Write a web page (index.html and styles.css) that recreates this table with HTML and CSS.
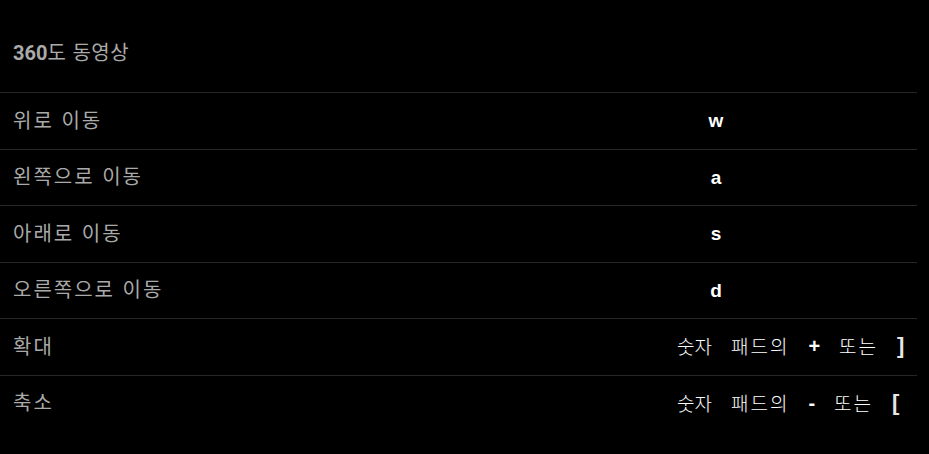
FILE: index.html
```html
<!DOCTYPE html>
<html lang="ko">
<head>
<meta charset="utf-8">
<link rel="stylesheet" href="styles.css">
</head>
<body>
<div class="panel">
  <div class="header"><span class="num">360</span>도 동영상</div>
  <div class="row"><div class="label">위로 이동</div><div class="key"><span class="k">w</span></div></div>
  <div class="row"><div class="label">왼쪽으로 이동</div><div class="key"><span class="k">a</span></div></div>
  <div class="row"><div class="label">아래로 이동</div><div class="key"><span class="k">s</span></div></div>
  <div class="row"><div class="label">오른쪽으로 이동</div><div class="key"><span class="k">d</span></div></div>
  <div class="row"><div class="label">확대</div><div class="key"><span class="combo"><span class="ko">숫자</span><span class="ko wide">패드의</span><span class="k">+</span><span class="ko wide">또는</span><span class="k br">]</span></span></div></div>
  <div class="row"><div class="label">축소</div><div class="key"><span class="combo"><span class="ko">숫자</span><span class="ko wide">패드의</span><span class="k">-</span><span class="ko wide">또는</span><span class="k br">[</span></span></div></div>
</div>
</body>
</html>
```
FILE: styles.css
```css
html, body {
  margin: 0;
  padding: 0;
  background: #000;
}
.panel {
  width: 917px;
  font-family: "Noto Sans CJK KR", "Noto Sans", sans-serif;
}
.header {
  height: 92px;
  box-sizing: border-box;
  padding: 38px 0 0 13px;
  font-size: 20px;
  line-height: 28px;
  color: #aaaaaa;
  letter-spacing: 0.5px;
}
.header .num {
  font-family: "Roboto", "Liberation Sans", sans-serif;
  font-weight: 700;
  letter-spacing: 0;
}
.row {
  display: grid;
  grid-template-columns: 676px 80px;
  align-items: center;
  height: 56.5px;
  box-sizing: border-box;
  border-top: 1px solid #262626;
}
.label {
  padding-left: 13px;
  font-size: 20px;
  letter-spacing: 2px;
  color: #aaaaaa;
  line-height: 28px;
  padding-bottom: 2px;
}
.key {
  text-align: center;
  white-space: nowrap;
  color: #fff;
  line-height: 28px;
}
.k {
  font-family: "Liberation Sans", Arial, sans-serif;
  font-weight: 700;
  font-size: 19px;
  color: #fff;
}
.combo {
  display: inline-flex;
  align-items: center;
  gap: 19px;
  padding-left: 1px;
}
.combo .k {
  font-size: 20px;
}
.ko {
  font-family: "Noto Sans CJK KR", sans-serif;
  font-weight: 300;
  font-size: 19px;
  letter-spacing: 0;
  color: #fff;
}
.ko.wide {
  letter-spacing: 2px;
}
.combo .br {
  color: #e6e6e6;
  font-size: 22px;
}
```
